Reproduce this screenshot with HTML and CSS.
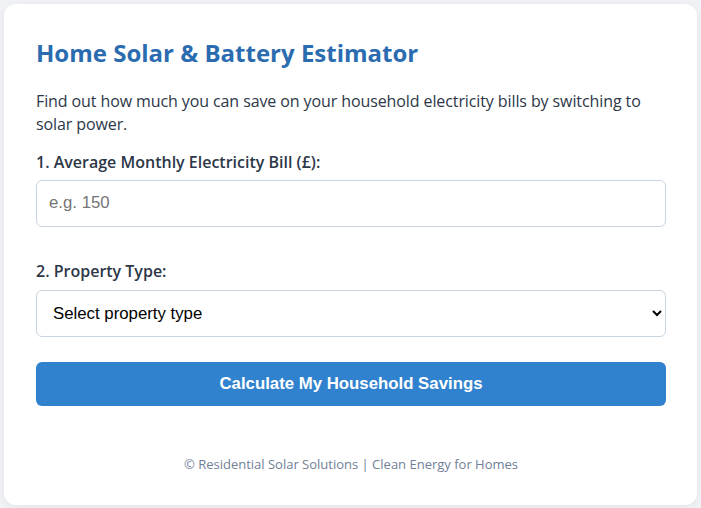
FILE: index.html
```html
<!DOCTYPE html>
<html lang="en">
<head>
  <meta charset="UTF-8">
  <meta name="viewport" content="width=device-width, initial-scale=1.0">
  <title>Home Solar &amp; Battery Estimator</title>
  <link rel="stylesheet" href="styles.css">
</head>
<body>
  <div class="card">
    <h1>Home Solar &amp; Battery Estimator</h1>
    <p class="intro">Find out how much you can save on your household electricity bills by switching to solar power.</p>

    <label for="bill">1. Average Monthly Electricity Bill (£):</label>
    <input type="number" id="bill" placeholder="e.g. 150">

    <label for="property">2. Property Type:</label>
    <select id="property">
      <option value="">Select property type</option>
      <option value="flat">Flat / Apartment</option>
      <option value="terraced">Terraced House</option>
      <option value="semi">Semi-Detached House</option>
      <option value="detached">Detached House</option>
    </select>

    <button id="calc">Calculate My Household Savings</button>

    <footer>© Residential Solar Solutions | Clean Energy for Homes</footer>
  </div>
</body>
</html>
```

FILE: styles.css
```css
* { box-sizing: border-box; }
body { margin: 0; padding: 4px; background: #f0f2f5; font-family: "Open Sans", sans-serif; color: #2d3748; }
.card { background: #fff; border-radius: 12px; padding: 32px 31px 32px 32px; box-shadow: 0 2px 8px rgba(0,0,0,.06); }
h1 { margin: 0 0 20px; font-size: 24px; line-height: 1.4; color: #2b6cb0; }
.intro { margin: 0 0 14px; font-size: 16px; line-height: 1.45; letter-spacing: -.1px; }
label { display: block; margin-bottom: 6px; font-size: 16px; font-weight: 600; line-height: 1.5; }
input, select { display: block; width: 100%; height: 47px; padding: 12px; border: 1px solid #cbd5e0; border-radius: 6px; font-family: "Liberation Sans", Arial, sans-serif; font-size: 16.8px; background: #fff; color: #000; }
input::placeholder { color: #757575; }
input { margin-bottom: 32px; }
select { margin-top: 7px; margin-bottom: 25px; }
button { display: block; width: 100%; height: 44px; border: none; border-radius: 6px; background: #3182ce; color: #fff; font-family: "Liberation Sans", Arial, sans-serif; font-size: 16.8px; font-weight: bold; cursor: pointer; }
button:hover { background: #2b6cb0; }
footer { margin-top: 49px; text-align: center; font-size: 13px; color: #718096; }
```
